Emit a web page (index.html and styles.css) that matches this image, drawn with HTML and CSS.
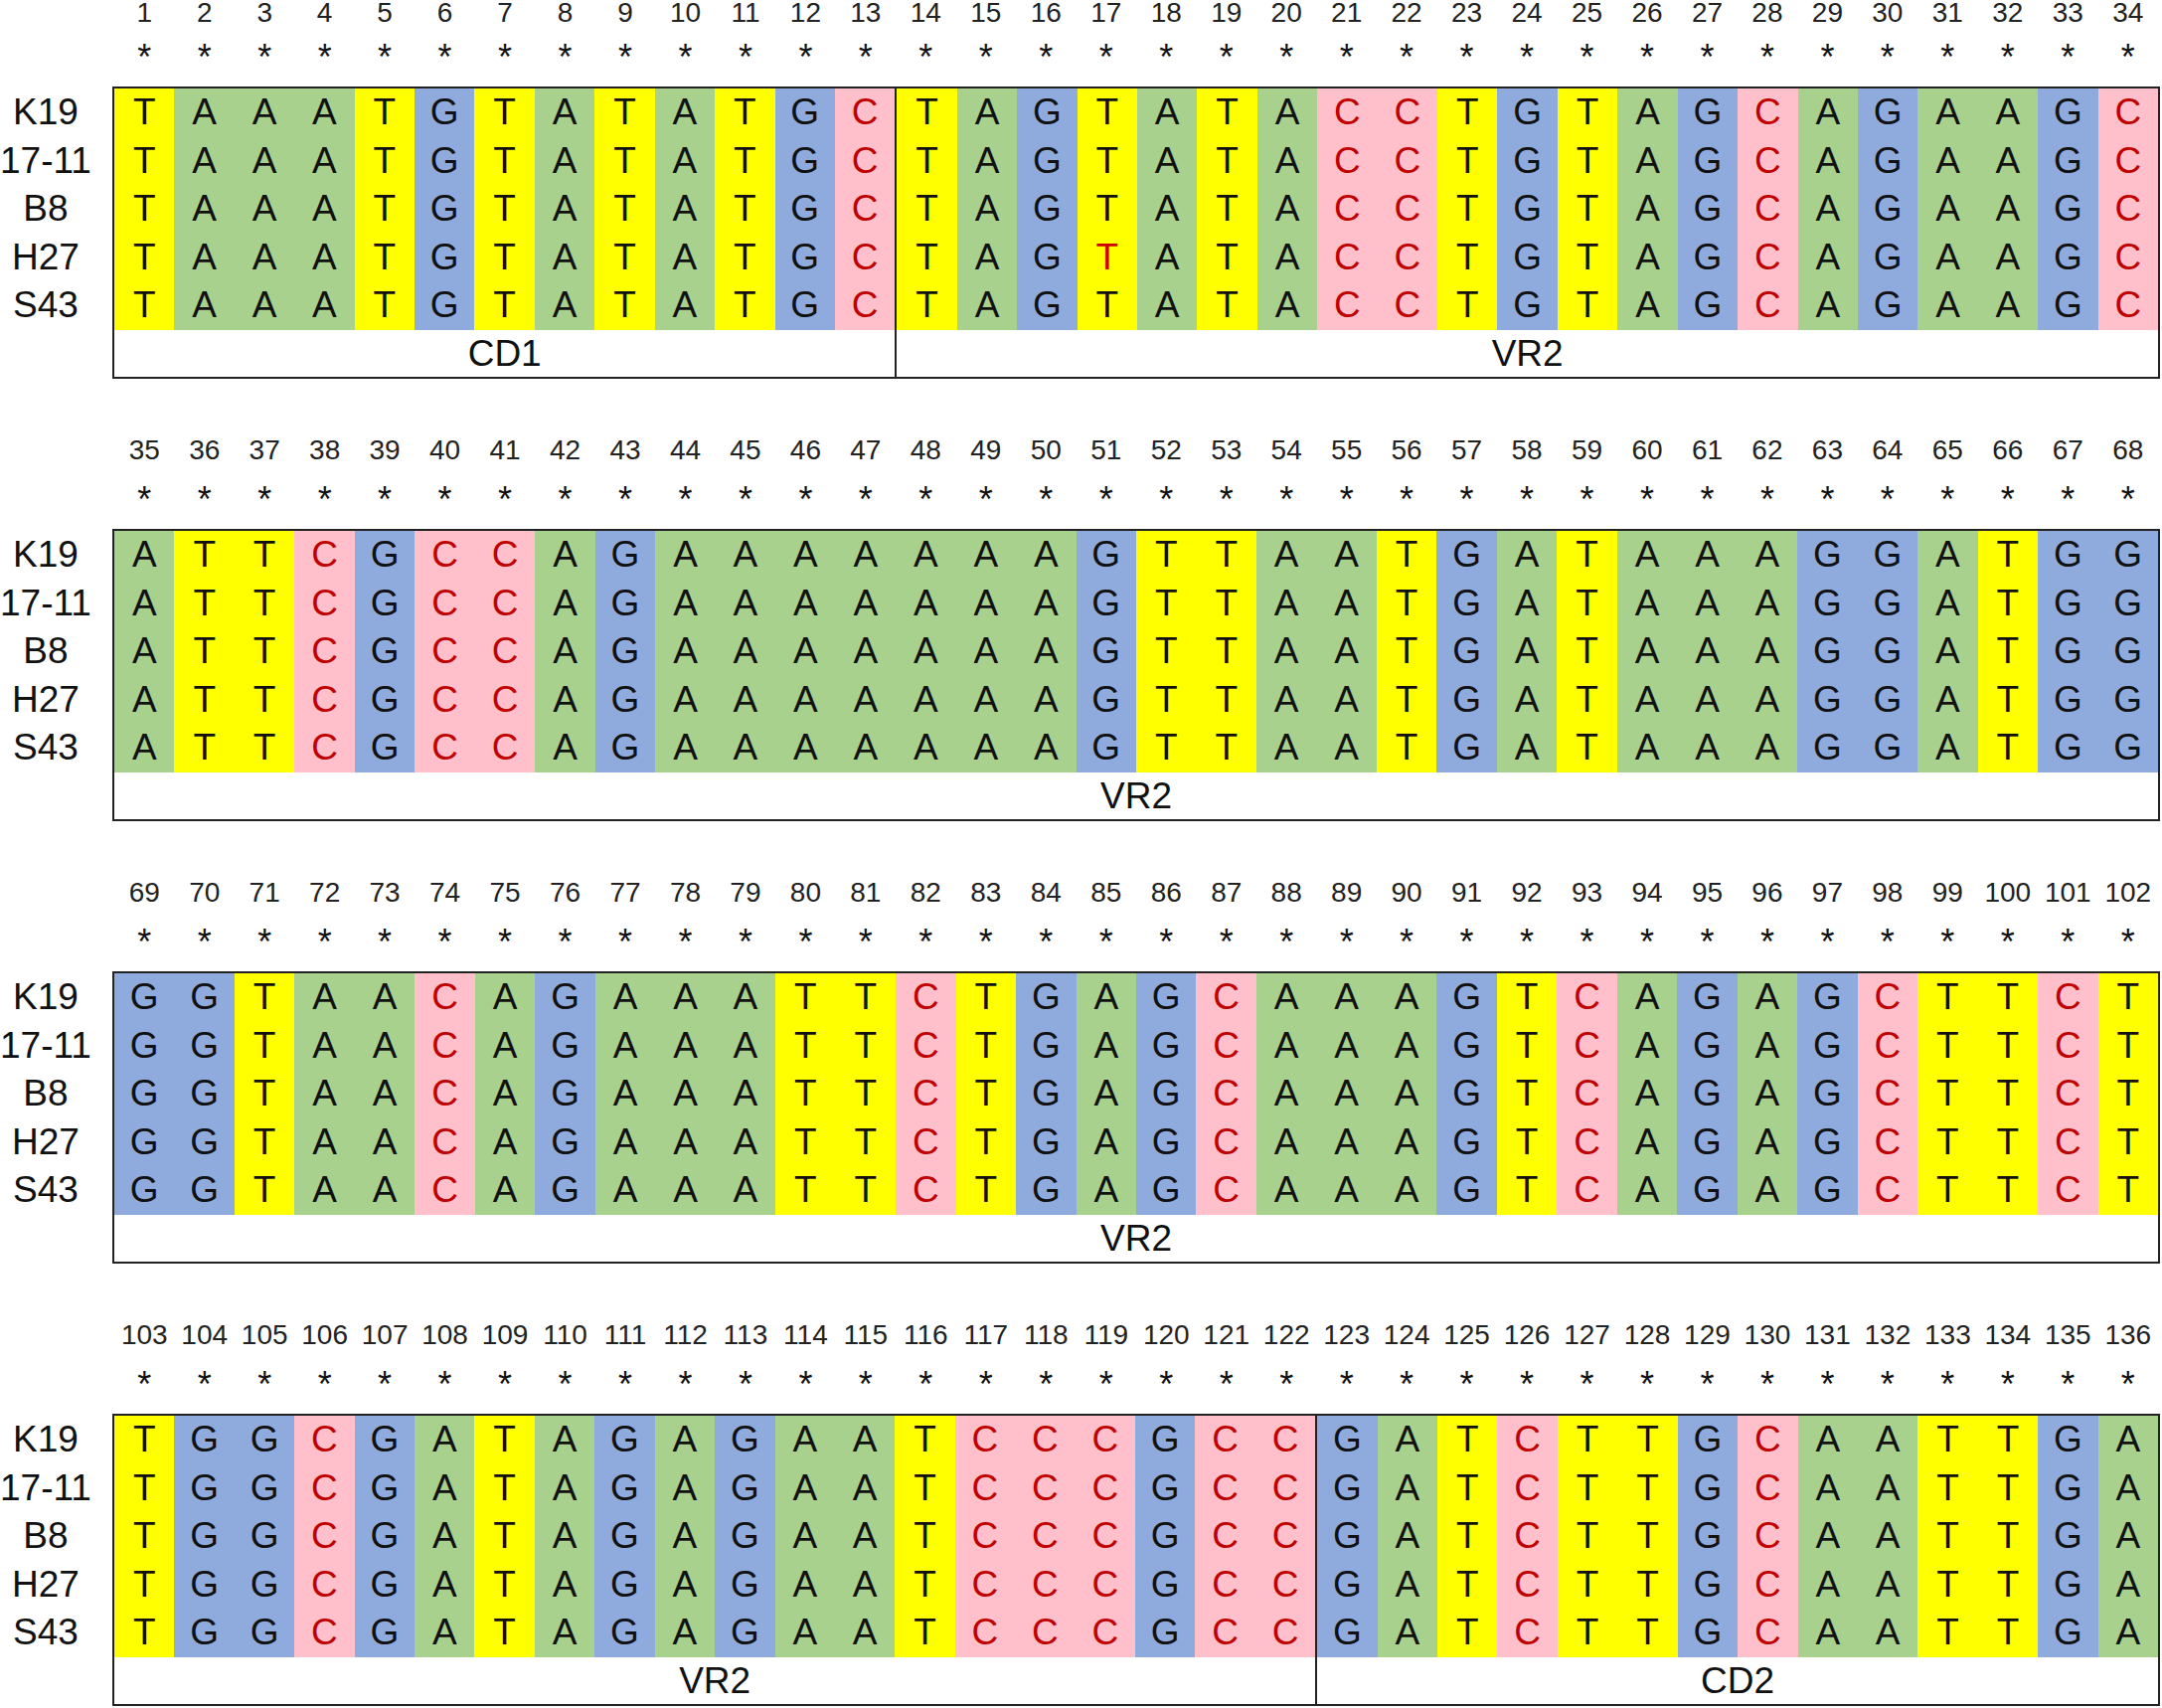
FILE: index.html
```html
<!doctype html>
<html>
<head>
<meta charset="utf-8">
<title>alignment</title>
<link rel="stylesheet" href="styles.css">
<script>
var names = ['K19','17-11','B8','H27','S43'];
var blocks = [
	{start:1, seq:'TAAATGTATATGCTAGTATACCTGTAGCAGAAGC', regs:[['CD1',13],['VR2',21]], mut:[[3,16]]},
	{start:35, seq:'ATTCGCCAGAAAAAAAGTTAATGATAAAGGATGG', regs:[['VR2',34]], mut:[]},
	{start:69, seq:'GGTAACAGAAATTCTGAGCAAAGTCAGAGCTTCT', regs:[['VR2',34]], mut:[]},
	{start:103, seq:'TGGCGATAGAGAATCCCGCCGATCTTGCAATTGA', regs:[['VR2',20],['CD2',14]], mut:[]}
];

function el(tag, cls, txt){
	var o = document.createElement(tag);
	if(cls) o.className = cls;
	if(txt!=null) o.textContent = txt;
	return o;
}

function isMut(b, r, c){
	for(var i=0;i<b.mut.length;i++){
		if(b.mut[i][0]==r && b.mut[i][1]==c) return true;
	}
	return false;
}

function drawBlock(b){
	var oBlock = el('section','block');
	var oNums = el('div','ruler nums');
	var oStars = el('div','ruler stars');
	for(var i=0;i<b.seq.length;i++){
		oNums.appendChild(el('span','',b.start+i));
		oStars.appendChild(el('span','','*'));
	}
	oBlock.appendChild(oNums);
	oBlock.appendChild(oStars);

	var oAln = el('div','aln');
	var oNames = el('div','names');
	for(var i=0;i<names.length;i++){
		oNames.appendChild(el('div','',names[i]));
	}
	oAln.appendChild(oNames);

	var oBox = el('div','box');
	var from = 0;
	for(var k=0;k<b.regs.length;k++){
		var n = b.regs[k][1];
		var oSeg = el('div','seg');
		oSeg.style.flexGrow = n;
		var oCells = el('div','cells');
		oCells.style.gridTemplateColumns = 'repeat('+n+',1fr)';
		for(var r=0;r<names.length;r++){
			for(var c=from;c<from+n;c++){
				var ch = b.seq.charAt(c);
				oCells.appendChild(el('div','c '+ch+(isMut(b,r,c)?' mut':''),ch));
			}
		}
		oSeg.appendChild(oCells);
		oSeg.appendChild(el('div','reg',b.regs[k][0]));
		oBox.appendChild(oSeg);
		from += n;
	}
	oAln.appendChild(oBox);
	oBlock.appendChild(oAln);
	return oBlock;
}

window.onload=function(){
	var oWrap = document.getElementById('fig');
	for(var i=0;i<blocks.length;i++){
		oWrap.appendChild(drawBlock(blocks[i]));
	}
};
</script>
</head>
<body>
<div id="fig"></div>
</body>
</html>
```

FILE: styles.css
```css
*{margin:0; padding:0;}
body{font-family:"Liberation Sans", Arial, sans-serif; color:#111; background:#fff; width:2175px;}
#fig{width:2175px;}
.block{margin-bottom:50px;}
.ruler{display:grid; grid-template-columns:repeat(34,1fr); margin-left:115px; width:2056px; text-align:center; font-size:28px;}
.nums{height:44px; line-height:44px; color:#222;}
.block:first-child .nums{height:30px; line-height:26px;}
.stars{height:44px; line-height:56px; font-size:36px; margin-bottom:13px;}
.aln{display:flex;}
.names{width:92px; margin-right:21px; padding-top:2px; font-size:37px; text-align:center;}
.names div{height:48.6px; line-height:48.6px;}
.box{width:2060px; box-sizing:border-box; border:2px solid #222; display:flex;}
.seg{flex-basis:0; min-width:0;}
.seg+.seg{border-left:2px solid #222;}
.cells{display:grid; grid-auto-rows:48.6px; font-size:37px; line-height:48.6px; text-align:center;}
.c{min-width:0;}
.c.A{background:#a9d18e;}
.c.T{background:#ffff00;}
.c.G{background:#8faadc;}
.c.C{background:#ffc0cb; color:#c00000;}
.c.mut{color:#d00000;}
.reg{height:47px; line-height:47px; text-align:center; font-size:37px;}
```
